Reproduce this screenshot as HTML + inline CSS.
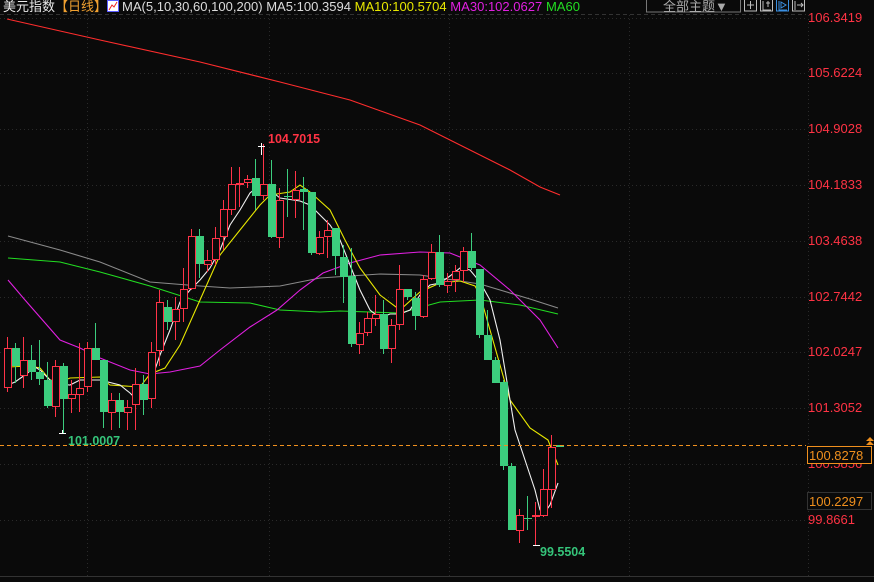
<!DOCTYPE html>
<html><head><meta charset="utf-8"><style>
html,body{margin:0;padding:0;background:#0a0a0a;width:874px;height:582px;overflow:hidden}
svg{position:absolute;left:0;top:0}
text{font-family:"Liberation Sans","Noto Sans CJK SC",sans-serif}
</style></head><body>
<svg width="874" height="582" viewBox="0 0 874 582" xmlns="http://www.w3.org/2000/svg">
<rect width="874" height="582" fill="#0a0a0a"/>
<g stroke="#2a2a2a" stroke-width="1" stroke-dasharray="1,3">
<line x1="0" y1="18.5" x2="806" y2="18.5"/>
<line x1="0" y1="73.5" x2="806" y2="73.5"/>
<line x1="0" y1="129.5" x2="806" y2="129.5"/>
<line x1="0" y1="185.5" x2="806" y2="185.5"/>
<line x1="0" y1="241.5" x2="806" y2="241.5"/>
<line x1="0" y1="297.5" x2="806" y2="297.5"/>
<line x1="0" y1="352.5" x2="806" y2="352.5"/>
<line x1="0" y1="408.5" x2="806" y2="408.5"/>
<line x1="0" y1="464.5" x2="806" y2="464.5"/>
<line x1="0" y1="520.5" x2="806" y2="520.5"/>
<line x1="87.5" y1="15" x2="87.5" y2="576"/>
<line x1="269.5" y1="15" x2="269.5" y2="576"/>
<line x1="449.5" y1="15" x2="449.5" y2="576"/>
<line x1="629.5" y1="15" x2="629.5" y2="576"/>
<line x1="808.5" y1="15" x2="808.5" y2="576"/>
</g>
<line x1="0" y1="14.5" x2="806" y2="14.5" stroke="#333" stroke-dasharray="4,3"/>
<line x1="0" y1="576.5" x2="874" y2="576.5" stroke="#333"/>
<g fill="none" stroke-width="1.1">
<polyline stroke="#ff2d2d" points="7,19 100,40 200,62 280,82 350,100 420,125 470,150 510,170 540,187 560,195"/>
<polyline stroke="#8a8a8a" points="8,236 60,250 100,262 150,282 200,286 230,288 280,286 320,278 380,274 420,275 480,284 530,299 558,308"/>
<polyline stroke="#22dd22" points="8,258 60,262 100,272 150,286 200,302 250,303 280,310 320,312 340,311 400,313 440,302 480,300 520,305 558,314"/>
<polyline stroke="#e020e0" points="8,280 25,300 60,340 80,348 100,358 130,370 150,374 170,372 200,366 220,350 250,327 277,310 300,290 323,273 350,263 380,255 420,252 450,253 480,265 510,290 540,320 558,348"/>
<polyline stroke="#e8e800" points="8,367 30,366 40,368 50,380 60,382 70,378 100,377 110,385 140,387 150,374 165,368 180,345 200,300 220,255 240,230 260,205 270,195 290,192 300,185 310,192 330,210 345,240 360,268 380,295 400,310 420,292 440,283 460,281 475,286 480,295 490,330 510,400 530,428 548,440 558,465"/>
<polyline stroke="#f0f0f0" points="8,385 15,382 25,375 35,367 40,370 50,380 60,384 70,385 80,380 100,380 120,385 130,393 137,400 145,397 150,384 160,355 170,330 180,302 190,290 200,280 210,268 220,250 230,225 240,210 250,193 260,185 265,186 270,190 280,198 300,201 310,205 320,215 330,225 340,240 350,265 360,290 370,310 380,318 390,314 400,314 410,310 420,295 430,285 440,283 450,276 460,268 470,270 480,282 490,300 500,340 510,400 515,430 525,460 535,490 540,510 545,512 550,505 558,483"/>
</g>
<g id="c" stroke-width="1"></g>
<line x1="0" y1="445.5" x2="806" y2="445.5" stroke="#f0901e" stroke-dasharray="4,3"/>
<text x="268" y="143" fill="#ff3344" font-size="12.5" font-weight="bold">104.7015</text>
<path d="M258 146.5h7M261.5 143v12" stroke="#fff" fill="none"/>
<text x="68" y="445" fill="#35c47a" font-size="12.5" font-weight="bold">101.0007</text>
<path d="M59 433.5h7M62.5 430v4" stroke="#fff" fill="none"/>
<text x="540" y="556" fill="#35c47a" font-size="12.5" font-weight="bold">99.5504</text>
<path d="M533 545.5h7" stroke="#fff" fill="none"/>
<g font-size="13" fill="#ff3344">
<text x="808" y="22">106.3419</text>
<text x="808" y="77">105.6224</text>
<text x="808" y="133">104.9028</text>
<text x="808" y="189">104.1833</text>
<text x="808" y="245">103.4638</text>
<text x="808" y="301">102.7442</text>
<text x="808" y="356">102.0247</text>
<text x="808" y="412">101.3052</text>
<text x="808" y="468">100.5856</text>
<text x="808" y="524">99.8661</text>
</g>
<rect x="807.5" y="446.5" width="64" height="17" fill="#0a0a0a" stroke="#f0901e"/>
<text x="809" y="460" fill="#f0901e" font-size="13">100.8278</text>
<path d="M866 441l4-4 4 4zM866 445l4-4 4 4z" fill="#f0901e"/>
<rect x="807.5" y="492.5" width="64" height="17" fill="#0a0a0a" stroke="#333"/>
<text x="809" y="506" fill="#f0901e" font-size="13">100.2297</text>
<rect x="0" y="0" width="874" height="13" fill="#0a0a0a"/>
<text x="3" y="11" font-size="13"><tspan fill="#e8e8e8">美元指数</tspan><tspan fill="#f0a030">【日线】</tspan></text>
<rect x="107.5" y="0.5" width="11" height="11" fill="#fff" stroke="#5a5aff"/>
<path d="M109 10l3-5 2 2 3-5" stroke="#e22" fill="none"/>
<text x="122" y="11" font-size="13" textLength="458" lengthAdjust="spacingAndGlyphs"><tspan fill="#dcdcdc">MA(5,10,30,60,100,200) MA5:100.3594 </tspan><tspan fill="#e8e800">MA10:100.5704 </tspan><tspan fill="#e020e0">MA30:102.0627 </tspan><tspan fill="#22dd22">MA60</tspan></text>
<rect x="646.5" y="-1" width="94" height="13" fill="#0a0a0a" stroke="#777"/>
<text x="663" y="11" font-size="13" fill="#aaa">全部主题▼</text>
<g fill="none" stroke="#bbb">
<rect x="744.5" y="-1" width="12" height="12"/><path d="M747 5h7M750.5 1v8"/>
<rect x="760.5" y="-1" width="12" height="12"/><path d="M763 1v9h8M766 3h4M768 1v6"/>
<rect x="776.5" y="-1" width="12" height="12" stroke="#3a8fe0"/><path d="M779 1v9h8M781 2l5 3-5 3z" stroke="#3a8fe0"/>
<rect x="792.5" y="-1" width="12" height="12"/><path d="M795 1v9M797 5h6M801 3l2 2-2 2"/>
</g>
</svg>
<script>
var d=[[7,348,387,337,392,1],[15,348,366,343,383,0],[23,360,375,337,388,1],[31,360,372,345,380,0],[39,372,379,340,385,0],[47,380,406,362,408,0],[55,366,406,360,417,1],[63,366,399,363,433,0],[71,394,398,380,413,1],[79,388,394,343,412,1],[87,348,386,342,392,1],[95,348,360,323,360,0],[103,360,412,360,428,0],[111,400,412,393,430,1],[119,400,412,393,428,0],[127,407,412,400,430,1],[135,384,404,368,430,1],[143,384,400,375,415,0],[151,352,398,342,408,1],[159,302,350,290,366,1],[167,307,322,300,330,0],[175,309,321,297,340,1],[183,289,308,268,322,1],[191,236,288,229,290,1],[199,236,264,229,278,0],[207,260,264,250,272,1],[215,238,259,227,265,1],[223,209,236,200,250,1],[231,184,209,167,215,1],[239,183,184,167,207,1],[247,179,182,175,188,1],[255,178,196,159,210,0],[263,184,195,144,200,1],[271,184,237,160,238,0],[279,200,237,188,248,1],[287,196,197,169,217,0],[295,190,199,171,218,1],[303,189,192,177,230,0],[311,192,253,192,255,0],[319,237,253,231,255,1],[327,230,236,220,258,1],[335,228,256,228,275,0],[343,257,277,245,303,0],[351,276,344,248,347,0],[359,333,344,322,354,1],[367,318,332,312,336,1],[375,314,318,295,326,1],[383,314,349,300,354,0],[391,325,348,319,363,1],[399,289,324,265,330,1],[407,289,297,289,300,0],[415,298,316,292,330,0],[423,279,316,275,318,1],[431,252,278,244,280,1],[439,252,285,235,287,0],[447,281,285,273,293,1],[455,271,279,265,292,1],[463,251,270,247,282,1],[471,251,268,233,270,0],[479,269,335,269,338,0],[487,335,360,310,360,0],[495,360,383,357,383,0],[503,382,466,380,470,0],[511,466,530,463,530,0],[519,515,530,509,543,1],[527,518,519,496,530,0],[535,515,516,502,545,1],[543,489,515,469,517,1],[551,447,489,435,508,1],[559,445,447,445,447,0]];
var s='',R='#ff3348',G='#3ccd7e';
d.forEach(function(c){var col=c[5]?R:G,x=c[0]+0.5;
s+='<line x1="'+x+'" y1="'+c[3]+'" x2="'+x+'" y2="'+c[4]+'" stroke="'+col+'"/>';
var h=Math.max(c[2]-c[1],1);
if(c[5])s+='<rect x="'+(c[0]-3+0.5)+'" y="'+(c[1]+0.5)+'" width="7" height="'+h+'" fill="#0a0a0a" stroke="'+R+'"/>';
else s+='<rect x="'+(c[0]-3)+'" y="'+c[1]+'" width="8" height="'+h+'" fill="'+G+'"/>';});
document.getElementById('c').innerHTML=s;
</script>
</body></html>
